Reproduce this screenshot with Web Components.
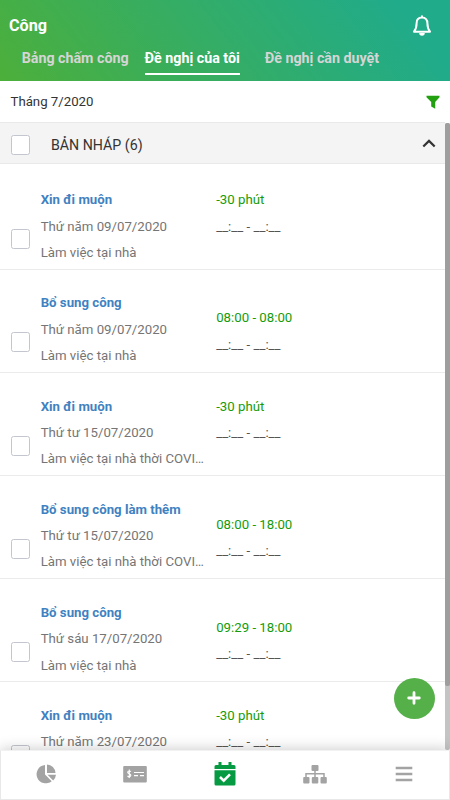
<!DOCTYPE html>
<html lang="vi">
<head>
<meta charset="utf-8">
<title>Công</title>
<style>
html,body{margin:0;height:100%;overflow:hidden;background:#fff}
body{font-family:Roboto,"Noto Sans",sans-serif;font-size:13.23px;color:#333}
</style>
</head>
<body>
<leave-app></leave-app>
<script>
const define = (name, html, setup) => {
  const tpl = document.createElement('template');
  tpl.innerHTML = html;
  customElements.define(name, class extends HTMLElement {
    connectedCallback() {
      if (this.shadowRoot) return;
      this.attachShadow({mode: 'open'}).append(tpl.content.cloneNode(true));
      if (setup) setup(this, this.shadowRoot);
    }
  });
};

define('check-box', `<style>
:host{display:block;box-sizing:border-box;width:19px;height:20px;border:1px solid #c3c5cf;border-radius:2.5px;background:#fff;flex:none}
</style>`);

define('tab-item', `<style>
:host{display:block;box-sizing:border-box;height:29px;line-height:25px;font-size:14.25px;font-weight:700;color:#d5d5d5;white-space:nowrap}
:host([active]){color:#fff;border-bottom:2px solid #fff}
</style><slot></slot>`);

define('app-header', `<style>
:host{display:flex;flex:none;flex-direction:column;box-sizing:border-box;height:81px;padding:13px 18px 0 9px;background:linear-gradient(52deg,#4caf3a 0%,#35ad64 45%,#20ab8b 90%);color:#fff}
.top{display:flex;justify-content:space-between;height:33px}
h1{margin:0;font-size:16.2px;line-height:25px;font-weight:700}
svg{width:20px;height:24px;margin-top:1px}
nav{display:flex;padding-left:12.700px}
tab-item+tab-item{margin-left:16px}
tab-item:last-child{margin-left:25px}
</style>
<div class="top"><h1>Công</h1>
<svg viewBox="0 0 20 24" fill="none" stroke="#fff" stroke-width="2" stroke-linejoin="round" stroke-linecap="round"><path d="M10 2.300v1.300M10 3.600C6.400 3.600 4.600 6 4.600 9.200C4.600 13.400 3.800 15.400 2 17.700H18C16.200 15.400 15.400 13.400 15.400 9.200C15.400 6 13.600 3.600 10 3.600Z"/><path d="M7.200 19H12.800A2.800 2.800 0 0 1 7.200 19Z" fill="#fff" stroke="none"/></svg></div>
<nav><tab-item>Bảng chấm công</tab-item><tab-item active>Đề nghị của tôi</tab-item><tab-item>Đề nghị cần duyệt</tab-item></nav>`);

define('month-bar', `<style>
:host{display:flex;flex:none;box-sizing:border-box;height:41px;padding:0 10px 0 10.500px;justify-content:space-between;align-items:center;color:#333}
svg{width:14px;height:14px}
</style><span><slot></slot></span>
<svg viewBox="0 0 14 14"><path d="M.5 .7H13.500V2.200L9.200 7V13.700L5.200 11.500V7L.5 2.200Z" fill="#23a010"/></svg>`);

define('group-head', `<style>
:host{display:flex;flex:none;box-sizing:border-box;height:42px;padding:0 9px 0 11px;align-items:center;background:#f4f4f4;border:solid #e9e9e9;border-width:1px 0;font-size:14.2px;color:#333}
span{margin-left:21px;flex:1;padding-top:3px}
check-box{margin-top:4px}
svg{width:14px;height:9px}
</style><check-box></check-box><span><slot></slot></span>
<svg viewBox="0 0 14 9" fill="none" stroke="#333" stroke-width="2.200"><path d="M1.300 7.500L7 1.900L12.700 7.500"/></svg>`);

define('request-row', `<style>
:host{display:flex;box-sizing:border-box;height:103.1px;padding:20.4px 0 0 11px;border-bottom:1px solid #ebebeb;line-height:26.4px;white-space:nowrap;flex:none}
check-box{margin-top:42px}
.info{width:175.5px;margin-left:10.7px;color:#757575}
b{display:block;font-weight:700;color:#3f82c1}
.time{color:#555}
.time.mid{padding-top:15px}
.g{color:#159c0b}
</style><check-box></check-box>
<div class="info"><b></b><div class="date"></div><div class="note"></div></div>
<div class="time"><div class="g"></div><div>__:__ - __:__</div></div>`,
(el, r) => {
  r.querySelector('b').textContent = el.getAttribute('kind');
  r.querySelector('.date').textContent = el.getAttribute('date');
  const note = el.getAttribute('note');
  if (note) r.querySelector('.note').textContent = note;
  else r.querySelector('.note').remove();
  r.querySelector('.g').textContent = el.getAttribute('time');
  if (el.getAttribute('time').includes(':')) r.querySelector('.time').classList.add('mid');
});

define('scroll-bar', `<style>
:host{display:block;width:5px;margin-top:1px;background:#c4c4c4;border-radius:2px}
div{height:563px;background:#9e9e9e;border-radius:2px}
</style><div></div>`);

define('add-button', `<style>
:host{display:grid;place-items:center;width:41px;height:41px;border-radius:50%;background:#56b04a}
svg{width:14px;height:14px}
</style><svg viewBox="0 0 14 14" stroke="#fff" stroke-width="2.800" stroke-linecap="round"><path d="M7 1.700V12.300M1.700 7H12.300"/></svg>`);

define('bottom-nav', `<style>
:host{display:flex;box-sizing:border-box;height:50px;background:#fff;border:1px solid #e8e8e8;border-top-color:#f2f2f2;box-shadow:0 -1px 13px rgba(0,0,0,.2);align-items:center;justify-content:space-around}
svg{width:26px;height:26px;fill:#a3a3a3;margin-top:-2px}
</style>
<svg viewBox="0 0 26 26"><path d="M12 4V13.500L18.700 20.200A9.200 9.200 0 1 1 12 4Z"/><path d="M14 3.500A9 9 0 0 1 22.500 12H14Z"/><path d="M14.500 13.700H23A9 9 0 0 1 20.200 19.400Z"/></svg>
<svg viewBox="0 0 26 26"><rect x="1.200" y="5" width="23.600" height="16.500" rx="1"/><g stroke="#fff" fill="none"><path d="M9 10.500Q7 9.400 6 10.500T7.300 12.700T8.400 15.200T5.500 15M7.300 8.500V17" stroke-width="1.100"/><path d="M12 11.500H22M12 14.700H16M18 14.700H22" stroke-width="1.200"/></g></svg>
<svg viewBox="0 0 26 26"><path fill="#069a43" d="M2.500 5.500Q2.500 4 4 4H6.500V1H9.500V4H16.500V1H19.500V4H22Q23.500 4 23.500 5.500V8H2.500ZM2.500 9.200H23.500V23Q23.500 24.500 22 24.500H4Q2.500 24.500 2.500 23Z"/><path d="M8 16L11.700 19.700L18 13.300" fill="none" stroke="#fff" stroke-width="2.500"/></svg>
<svg viewBox="0 0 26 26"><rect x="9.500" y="4" width="7" height="6" rx="1"/><path d="M13 9V16M4 16V12.800H22V16" fill="none" stroke="#a3a3a3" stroke-width="1.500"/><rect x="1.200" y="16" width="6.300" height="6.500" rx="1"/><rect x="9.800" y="16" width="6.500" height="6.500" rx="1"/><rect x="18.500" y="16" width="6.300" height="6.500" rx="1"/></svg>
<svg viewBox="0 0 26 26"><path d="M4.700 5.800H21.300V8.300H4.700ZM4.700 11.800H21.300V14.300H4.700ZM4.700 17.800H21.300V20.300H4.700Z"/></svg>`);

define('leave-app', `<style>
:host{display:flex;flex-direction:column;position:relative;width:450px;height:800px;overflow:hidden;background:#fff}
main{display:flex;flex:1;min-height:0}
.list{flex:1;min-width:0;overflow:hidden;display:flex;flex-direction:column}
.first{padding-top:3px;flex:none}
bottom-nav{position:relative;flex:none}
add-button{position:absolute;left:393.5px;top:677.5px}
</style>
<app-header></app-header>
<month-bar>Tháng 7/2020</month-bar>
<main><div class="list">
<group-head>BẢN NHÁP (6)</group-head>
<div class="first"><request-row kind="Xin đi muộn" date="Thứ năm 09/07/2020" note="Làm việc tại nhà" time="-30 phút"></request-row></div>
<request-row kind="Bổ sung công" date="Thứ năm 09/07/2020" note="Làm việc tại nhà" time="08:00 - 08:00"></request-row>
<request-row kind="Xin đi muộn" date="Thứ tư 15/07/2020" note="Làm việc tại nhà thời COVI…" time="-30 phút"></request-row>
<request-row kind="Bổ sung công làm thêm" date="Thứ tư 15/07/2020" note="Làm việc tại nhà thời COVI…" time="08:00 - 18:00"></request-row>
<request-row kind="Bổ sung công" date="Thứ sáu 17/07/2020" note="Làm việc tại nhà" time="09:29 - 18:00"></request-row>
<request-row kind="Xin đi muộn" date="Thứ năm 23/07/2020" time="-30 phút"></request-row>
</div><scroll-bar></scroll-bar></main>
<bottom-nav></bottom-nav>
<add-button></add-button>`);
</script>
</body>
</html>
